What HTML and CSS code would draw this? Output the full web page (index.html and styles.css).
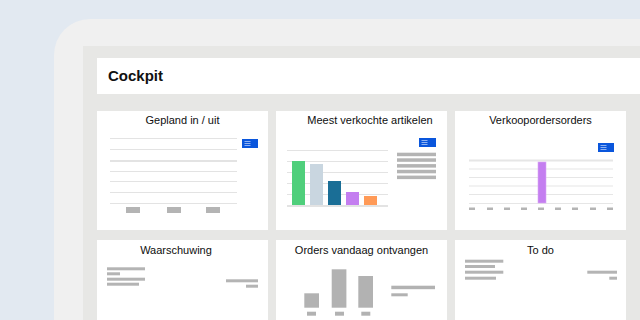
FILE: index.html
```html
<!DOCTYPE html>
<html lang="nl">
<head>
<meta charset="utf-8">
<title>Cockpit</title>
<link rel="stylesheet" href="styles.css">
</head>
<body>
<div class="device">
  <div class="screen">
    <header class="topbar"><h1 class="page-title">Cockpit</h1></header>
    <main class="grid">
      <section class="card">
        <h2 class="card-title">Gepland in / uit</h2>
        <svg class="chart" width="171" height="103" viewBox="0 0 171 103">
          <g fill="#e3e3e3">
            <rect x="13" y="11" width="127" height="1"/>
            <rect x="13" y="22" width="127" height="1"/>
            <rect x="13" y="33" width="127" height="2"/>
            <rect x="13" y="44" width="127" height="1"/>
            <rect x="13" y="54" width="127" height="1"/>
            <rect x="13" y="65" width="127" height="1"/>
            <rect x="13" y="76" width="127" height="1"/>
          </g>
          <g transform="translate(145 12)">
            <rect width="16" height="9" fill="#0a56dc"/>
            <g fill="#8fb2f2"><rect x="2.5" y="2" width="6" height="1"/><rect x="2.5" y="4" width="6" height="1"/><rect x="2.5" y="6" width="6" height="1"/></g>
          </g>
          <g fill="#b4b4b4">
            <rect x="29" y="80" width="14" height="6"/>
            <rect x="70" y="80" width="14" height="6"/>
            <rect x="109" y="80" width="14" height="6"/>
          </g>
        </svg>
      </section>
      <section class="card">
        <h2 class="card-title title-shift-right">Meest verkochte artikelen</h2>
        <svg class="chart" width="171" height="103" viewBox="0 0 171 103">
          <g fill="#e3e3e3">
            <rect x="11" y="23" width="101" height="1"/>
            <rect x="11" y="34" width="101" height="1"/>
            <rect x="11" y="45" width="101" height="1"/>
            <rect x="11" y="56" width="101" height="1"/>
            <rect x="11" y="67" width="101" height="1"/>
            <rect x="11" y="78" width="101" height="2"/>
          </g>
          <rect x="16" y="34" width="13" height="44" fill="#4fcf7b"/>
          <rect x="34" y="37" width="13" height="41" fill="#c9d6e0"/>
          <rect x="52" y="54" width="13" height="24" fill="#1a6e96"/>
          <rect x="70" y="65" width="13" height="13" fill="#c47ef0"/>
          <rect x="88" y="69" width="13" height="9" fill="#ff9a57"/>
          <g transform="translate(143 11)">
            <rect width="17" height="9" fill="#0a56dc"/>
            <g fill="#8fb2f2"><rect x="2.5" y="2" width="6" height="1"/><rect x="2.5" y="4" width="6" height="1"/><rect x="2.5" y="6" width="6" height="1"/></g>
          </g>
          <g fill="#b4b4b4">
            <rect x="121" y="25.7" width="39" height="3.5"/>
            <rect x="121" y="31.3" width="39" height="3.5"/>
            <rect x="121" y="37.1" width="39" height="3.5"/>
            <rect x="121" y="42.8" width="39" height="3.5"/>
            <rect x="121" y="48.6" width="39" height="3.5"/>
          </g>
        </svg>
      </section>
      <section class="card">
        <h2 class="card-title">Verkoopordersorders</h2>
        <svg class="chart" width="171" height="103" viewBox="0 0 171 103">
          <g fill="#e6e6e6">
            <rect x="14" y="32.5" width="144" height="2"/>
            <rect x="14" y="41.5" width="144" height="1"/>
            <rect x="14" y="50" width="144" height="1"/>
            <rect x="14" y="58.5" width="144" height="1"/>
            <rect x="14" y="67" width="144" height="1"/>
            <rect x="14" y="76" width="144" height="1"/>
          </g>
          <rect x="83" y="35" width="8" height="41" fill="#c47ef0" stroke="#d9a8f6" stroke-width="0.6"/>
          <g transform="translate(143 16)">
            <rect width="16" height="9" fill="#0a56dc"/>
            <g fill="#8fb2f2"><rect x="2.5" y="2" width="6" height="1"/><rect x="2.5" y="4" width="6" height="1"/><rect x="2.5" y="6" width="6" height="1"/></g>
          </g>
          <g fill="#b4b4b4">
            <rect x="14" y="80.5" width="6" height="2.5"/>
            <rect x="32" y="80.5" width="6" height="2.5"/>
            <rect x="49" y="80.5" width="6" height="2.5"/>
            <rect x="66" y="80.5" width="6" height="2.5"/>
            <rect x="83" y="80.5" width="6" height="2.5"/>
            <rect x="100" y="80.5" width="6" height="2.5"/>
            <rect x="117" y="80.5" width="6" height="2.5"/>
            <rect x="135" y="80.5" width="6" height="2.5"/>
            <rect x="152" y="80.5" width="6" height="2.5"/>
          </g>
        </svg>
      </section>
      <section class="card">
        <h2 class="card-title title-shift-left">Waarschuwing</h2>
        <svg class="chart" width="171" height="103" viewBox="0 0 171 103">
          <g fill="#b4b4b4">
            <rect x="10" y="10.3" width="38" height="3"/>
            <rect x="10" y="15.3" width="13" height="3"/>
            <rect x="10" y="20.7" width="38" height="3"/>
            <rect x="10" y="25.7" width="32" height="3"/>
            <rect x="129" y="22.3" width="32" height="3"/>
            <rect x="149" y="27.7" width="12" height="3"/>
          </g>
        </svg>
      </section>
      <section class="card">
        <h2 class="card-title">Orders vandaag ontvangen</h2>
        <svg class="chart" width="171" height="103" viewBox="0 0 171 103">
          <g fill="#b2b2b2">
            <rect x="28.3" y="36.3" width="14.7" height="14.4"/>
            <rect x="55.7" y="12.3" width="14.7" height="38.4"/>
            <rect x="82.3" y="19" width="14.7" height="31.7"/>
            <rect x="31" y="54.7" width="9" height="4"/>
            <rect x="59" y="54.7" width="9" height="4"/>
            <rect x="85.3" y="54.7" width="9" height="4"/>
            <rect x="115.3" y="28.7" width="43.7" height="3.5"/>
            <rect x="115.3" y="36.3" width="16.4" height="3"/>
          </g>
        </svg>
      </section>
      <section class="card">
        <h2 class="card-title title-low">To do</h2>
        <svg class="chart" width="171" height="103" viewBox="0 0 171 103">
          <g fill="#b4b4b4">
            <rect x="10" y="2.7" width="38.3" height="3"/>
            <rect x="10" y="8" width="30" height="3"/>
            <rect x="10" y="13.7" width="38.3" height="3"/>
            <rect x="10" y="19.7" width="31" height="3"/>
            <rect x="132.3" y="13.7" width="29.7" height="3"/>
            <rect x="154.3" y="19.7" width="7.7" height="3"/>
          </g>
        </svg>
      </section>
    </main>
  </div>
</div>
</body>
</html>
```
FILE: styles.css
```css
html, body {
  margin: 0;
  padding: 0;
  overflow: hidden;
}
body {
  width: 640px;
  height: 320px;
  background: #e2e9f1;
  font-family: "Liberation Sans", Arial, sans-serif;
  color: #161616;
}
.device {
  margin: 19px 0 0 54px;
  padding: 27px 0 0 29px;
  background: #f0f0f0;
  border-top-left-radius: 36px;
  height: 274px;
}
.screen {
  background: #e7e7e5;
  padding: 12px 0 0 14px;
  height: 262px;
  overflow: hidden;
}
.topbar {
  background: #ffffff;
  height: 36px;
  display: flex;
  align-items: center;
  padding-left: 11px;
  margin-bottom: 17px;
}
.page-title {
  margin: 0;
  font-size: 15px;
  font-weight: 700;
  color: #111111;
  line-height: 18px;
}
.grid {
  display: grid;
  grid-template-columns: repeat(3, 171px);
  grid-auto-rows: 119px;
  column-gap: 8px;
  row-gap: 10px;
}
.card {
  background: #ffffff;
  display: flex;
  flex-direction: column;
  overflow: hidden;
}
.card-title {
  margin: 0;
  padding-top: 3px;
  font-size: 11px;
  line-height: 13px;
  font-weight: 400;
  text-align: center;
  color: #0e0e0e;
}
.grid .card:nth-child(n+4) .card-title {
  padding-top: 4px;
}
.grid .card .title-low {
  padding-top: 6px;
}
.title-shift-right {
  padding-left: 17px;
}
.title-shift-left {
  padding-right: 13px;
}
.chart {
  display: block;
  flex: none;
}
```
